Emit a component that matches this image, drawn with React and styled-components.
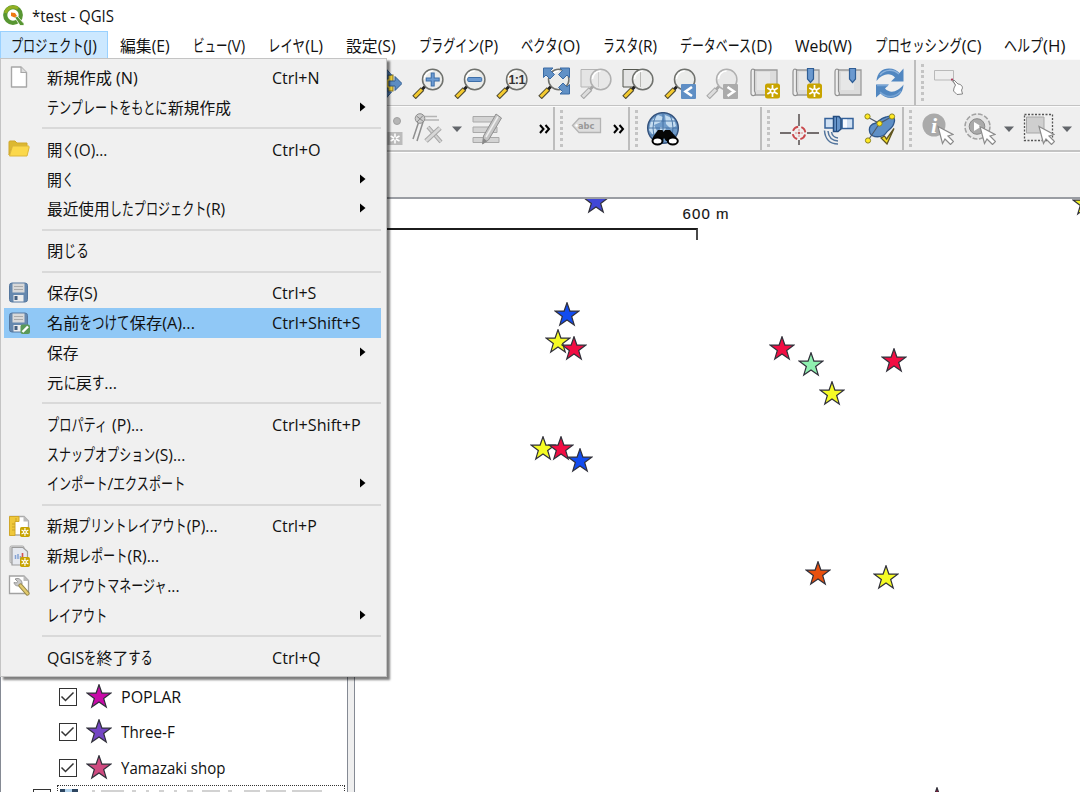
import React, { useLayoutEffect, useRef, useState } from 'react';
import styled, { createGlobalStyle } from 'styled-components';

const GlobalStyle = createGlobalStyle`
  * { box-sizing: border-box; }
  body { margin: 0; background: #fff; overflow: hidden; }
`;

const Window = styled.div`
  position: relative;
  width: 1080px;
  height: 792px;
  overflow: hidden;
  display: flex;
  flex-direction: column;
  background: #fff;
  color: #111;
  font-family: 'Open Sans', 'Noto Sans CJK JP', sans-serif;
  font-size: 15.5px;
  line-height: 22px;
  svg { display: block; flex: none; }
`;

/* ---------- text with condensed kana ---------- */

const FitBox = styled.span`
  display: inline-block;
  flex: none;
  white-space: nowrap;
`;
const FitInner = styled.span`
  display: inline-block;
  transform-origin: 0 50%;
`;
const KanaBox = styled.span`
  display: inline-block;
  width: ${(p) => p.$count * 0.77}em;
`;
const KanaInner = styled.span`
  display: inline-block;
  transform-origin: 0 60%;
  transform: scale(0.77, 1.08);
`;

function Fit({ text, width }) {
  const ref = useRef(null);
  const [scale, setScale] = useState(1);
  useLayoutEffect(() => {
    setScale(width / ref.current.offsetWidth);
  }, [text, width]);
  const runs = text.match(/[\u3040-\u30ff]+|[^\u3040-\u30ff]+/g);
  return (
    <FitBox style={{ width }}>
      <FitInner ref={ref} style={{ transform: `scaleX(${scale})` }}>
        {runs.map((run, i) =>
          /[\u3040-\u30ff]/.test(run) ? (
            <KanaBox key={i} $count={run.length}>
              <KanaInner>{run}</KanaInner>
            </KanaBox>
          ) : (
            <span key={i} style={{ whiteSpace: 'pre' }}>{run}</span>
          )
        )}
      </FitInner>
    </FitBox>
  );
}

/* ---------- title and menu bar ---------- */

const TitleBar = styled.header`
  flex: none;
  height: 31px;
  display: flex;
  align-items: center;
  padding: 0 0 0 2px;
  gap: 7px;
`;
const MenuBar = styled.nav`
  flex: none;
  height: 28px;
  display: flex;
  align-items: stretch;
`;
const MenuTitle = styled.div`
  display: flex;
  align-items: center;
  padding: 1px 11px 0 12px;
  ${(p) => p.$open && `
    background: #cce8ff;
    box-shadow: inset 0 0 0 1px #99d1ff;
    padding-left: 10.5px;
  `}
`;

const MENUS = [
  ['プロジェクト(J)', 86], ['編集(E)', 50], ['ビュー(V)', 52], ['レイヤ(L)', 55],
  ['設定(S)', 50], ['プラグイン(P)', 79], ['ベクタ(O)', 59], ['ラスタ(R)', 54.5],
  ['データベース(D)', 92], ['Web(W)', 57], ['プロセッシング(C)', 106], ['ヘルプ(H)', 61],
];

/* ---------- tool bars ---------- */

const ToolBarRow = styled.div`
  flex: none;
  display: flex;
  height: ${(p) => p.$height}px;
  background: #efefef;
  border-top: 1px solid #fbfbfb;
  border-bottom: ${(p) => p.$edge || 1}px solid #c3c3c3;
`;
const ToolGroup = styled.div`
  flex: none;
  display: flex;
  align-items: center;
  width: ${(p) => p.$width}px;
  padding-left: ${(p) => p.$indent || 0}px;
  border-right: 2px solid #bdbdbd;
  &:last-child { border-right: 0; }
`;
const Slot = styled.div`
  flex: none;
  display: flex;
  justify-content: center;
  width: ${(p) => p.$width || 42}px;
  margin-left: ${(p) => p.$gap || 0}px;
`;
const Handle = styled.div`
  flex: none;
  width: 3px;
  height: 37px;
  margin-left: 5px;
  background: repeating-linear-gradient(#c4c4c4 0 3px, transparent 3px 5.6px);
`;
const Expander = styled.div`
  flex: none;
  width: 12px;
  margin-left: ${(p) => p.$gap}px;
`;
const Spacer = styled.div`
  flex: none;
  height: 47px;
  background: #efefef;
  border-top: 1px solid #fdfdfd;
  border-bottom: 2px solid #9a9da3;
`;

const Icon = ({ w = 32, h = 32, children }) => (
  <svg width={w} height={h} viewBox={`0 0 ${w} ${h}`} fill="none">{children}</svg>
);
const Chevrons = () => (
  <Icon w={12} h={12}>
    <path d="M1 2 4.5 6 1 10M6.5 2 10 6 6.500 10" stroke="#000" strokeWidth="2" />
  </Icon>
);
const DropArrow = () => (
  <Icon w={10} h={6}><path d="M0 0.500H10L5 6Z" fill="#63666b" /></Icon>
);

function Lens({ gray, page, children }) {
  return (
    <Icon>
      {page && <path d="M1 2.500H18V20H1Z" fill="#e4e4e4" stroke={gray ? '#b5b5b5' : '#55574f'} />}
      <path d="M14 18.500 9.500 23" stroke={gray ? '#a7a7a7' : '#222'} strokeWidth="3" />
      <path d="M10.500 22 2 30.500" stroke={gray ? '#a5a5a5' : '#4b4630'} strokeWidth="5" />
      <path d="M9.800 22.500 2.700 29.700" stroke={gray ? '#ddd' : '#f5cb30'} strokeWidth="3" />
      <circle cx="20.700" cy="12.500" r="10.200" fill={gray ? '#e8e8e8' : '#ebecea'} stroke={gray ? '#b0b0b0' : '#6f716d'} strokeWidth="1.500" />
      {page && <path d="M18.500 3.500V20" stroke={gray ? '#ccc' : '#b8b8b4'} />}
      <path d="M12.500 12a8.200 8.200 0 0 1 8-8" stroke="#fff" strokeWidth="1.500" />
      {children}
    </Icon>
  );
}
const ZoomIn = () => (
  <Lens>
    <path d="M20.700 5.500V19.500M13.700 12.500H27.700" stroke="#3c6ea8" strokeWidth="4" />
    <path d="M20.700 6.500V18.500M14.700 12.500H26.700" stroke="#6c9bd2" strokeWidth="2" />
  </Lens>
);
const ZoomOut = () => (
  <Lens>
    <rect x="13.700" y="10.500" width="14" height="4" rx="1" fill="#6c9bd2" stroke="#3c6ea8" />
  </Lens>
);
const ZoomNative = () => (
  <Lens>
    <text x="20.900" y="17" textAnchor="middle" fontFamily="Liberation Sans, sans-serif" fontWeight="700" fontSize="12.500" textLength="17" fill="#333">1:1</text>
  </Lens>
);
const ZoomFull = () => (
  <Lens>
    <path d="M5.500 1H15L12.500 3.500 16.500 7.500 12 12 8 8 5.500 10.500ZM31.500 1H22L24.500 3.500 20.500 7.500 25 12 29 8 31.500 10.500ZM31.500 27H22L24.500 24.500 20.500 20.500 25 16 29 20 31.500 17.500Z" fill="#6191c6" stroke="#3b6ba4" />
  </Lens>
);
const ZoomLast = () => (
  <Lens>
    <rect x="17" y="17" width="15" height="15" rx="1" fill="#5f8fc5" />
    <path d="M28 20 21.500 24.500 28 29" stroke="#fff" strokeWidth="2.600" />
  </Lens>
);
const ZoomNext = () => (
  <Lens gray>
    <rect x="17" y="17" width="15" height="15" rx="1" fill="#ababab" />
    <path d="M21.500 20 28 24.500 21.500 29" stroke="#fff" strokeWidth="2.600" />
  </Lens>
);
const PanMap = () => (
  <Icon>
    <rect x="7" y="8" width="16" height="16" fill="#f2d33b" stroke="#7c6d20" />
    <path d="M32 16.500 25 9.500V14H19V19H25V23.500ZM15.500 1 9.500 8H13V12H18V8H21.500ZM13 21V25H9.500L15.500 32 21.500 25H18V21Z" fill="#5c8cc2" stroke="#315a8c" />
  </Icon>
);
function Spark({ x, y, gray }) {
  return (
    <g transform={`translate(${x} ${y})`}>
      <rect width="15" height="15" rx="2.500" fill={gray ? '#bdbdbd' : '#c8a400'} />
      <path d="M7.500 1.500V13.500M2.300 4.500 12.700 10.500M12.700 4.500 2.300 10.500" stroke="#fff" strokeWidth="1.700" />
      <circle cx="7.500" cy="7.500" r="2.800" fill="#fff" />
      <circle cx="7.500" cy="7.500" r="1.300" fill={gray ? '#bdbdbd' : '#c8a400'} />
    </g>
  );
}
function BookMap({ spark, ribbon }) {
  return (
    <Icon>
      <path d="M6 3H29V28H6Z" fill="#dcdcdc" stroke="#9a9a9a" strokeWidth="1.300" />
      <path d="M9 5H22V23H9Z" fill="#e7e7e7" />
      <path d="M6.500 2.500Q3 1 3 5V25Q2.500 29 6 28.500 8.500 28 6.500 24Z" fill="#eee" stroke="#909090" strokeWidth="1.200" />
      {ribbon && <path d="M17.500 1.500H23.500V12L20.500 15.500 17.500 12Z" fill="#6b99cf" stroke="#2f5e96" strokeWidth="1.200" />}
      {spark && <Spark x={17} y={16.500} />}
    </Icon>
  );
}
const Refresh = () => (
  <Icon>
    <path d="M2.500 14C3 6 8 1.500 15 1.500 19.500 1.500 23 3.500 25.500 6L29.500 1.500V14.500H17L21 10.500C16 5 8 7 2.500 14Z" fill="#5187c1" />
    <path d="M29.500 17.500C29 26 24 31 17 31 12.500 31 9 29 6.500 26.500L2 30.500V17.500H15L11 21.500C16 27 24 25 29.500 17.500Z" fill="#5187c1" />
    <path d="M6 8C11 2 19 2 25 7" stroke="#8cb2dd" strokeWidth="1.500" />
    <path d="M3 18.500H14M6 25C12 31 21 31 27 24" stroke="#79a5d5" strokeWidth="1.500" />
  </Icon>
);
const RectHand = () => (
  <Icon>
    <path d="M1.500 3.500H20.500V13H1.500Z" fill="#eee" stroke="#b9b9b9" />
    <path d="M18.500 12 26 21" stroke="#aaa" strokeWidth="2" />
    <circle cx="19" cy="12.500" r="1" fill="#b32950" />
    <path d="M20 14 22.500 18 21 21 20.500 24 24 27.500 29.500 27 28.500 23C31 20 28 17 25 17L21 13Z" fill="#fff" stroke="#777" strokeWidth="0.900" />
  </Icon>
);

const Digitize = () => (
  <Icon>
    <circle cx="3" cy="8" r="3.500" fill="#bbb" /><circle cx="18" cy="8" r="3.500" fill="#b5b5b5" stroke="#a0a0a0" />
    <path d="M8.500 19H23.500V32H8.500Z" fill="#bbb" />
    <path d="M16 20.500V30.500M11.500 23 20.500 28M20.500 23 11.500 28" stroke="#fff" strokeWidth="1.600" />
    <circle cx="16" cy="25.500" r="1.200" fill="#bbb" />
  </Icon>
);
const VertexTool = () => (
  <Icon>
    <path d="M7 8 1 26M11 9 5 28" stroke="#8f8f8f" strokeWidth="1.500" />
    <path d="M12 3.500H25M12 7H27" stroke="#b4b4b4" strokeWidth="1.500" />
    <circle cx="8" cy="5.500" r="4.800" fill="#ccc" stroke="#8e8e8e" />
    <path d="M4.500 3 12 9M11 2.500 5 9" stroke="#888" />
    <path d="M16 14 29 29" stroke="#a2a2a2" strokeWidth="4" />
    <path d="M16 14 29 29" stroke="#d2d2d2" strokeWidth="2" />
    <path d="M28 15 14 28" stroke="#a8a8a8" strokeWidth="5" />
    <path d="M28 15 14 28" stroke="#d8d8d8" strokeWidth="2.800" />
  </Icon>
);
const EditPencil = () => (
  <Icon>
    <path d="M2 3.500H26V9H2ZM2 14H26V19.500H2ZM2 24.500H28V29.500H2Z" fill="#d3d3d3" stroke="#a9a9a9" />
    <path d="M25 1 30.500 5 17.500 27 11.500 31 12.500 23Z" fill="#c4c4c4" stroke="#8f8f8f" />
    <path d="M27 3.500 15 24" stroke="#eee" strokeWidth="1.500" />
    <path d="M12.300 25 11.500 31 16 28Z" fill="#888" />
  </Icon>
);
const LabelTag = () => (
  <Icon>
    <path d="M1.500 12.500 8 5.500H29.500V19.500H8Z" fill="#dedede" stroke="#b4b4b4" strokeWidth="1.300" />
    <circle cx="5.500" cy="12.500" r="1.200" fill="#fff" />
    <text x="7" y="16" fontFamily="DejaVu Sans, sans-serif" fontWeight="700" fontSize="8.500" textLength="16.500" lengthAdjust="spacingAndGlyphs" fill="#999">abc</text>
  </Icon>
);
const GlobeBinoculars = () => (
  <Icon w={34} h={34}>
    <circle cx="17" cy="16" r="15.300" fill="#6f9bc9" stroke="#35537d" strokeWidth="1.500" />
    <path d="M5 9 12 3 17 5 15 10 8 13 11 19 7 23 3 18ZM19 3 28 7 30 14 25 17 20 12ZM14 15 20 16 18 22 14 20Z" fill="#c4dcf0" />
    <path d="M2 16H32M4 9H30M4 23H30M17 1V31M10 3Q4 16 10 29M24 3Q30 16 24 29" stroke="#4470a3" strokeWidth="0.900" />
    <path d="M12 18H16.500L17.500 20 19 18H24L30 25 32 29H20L18 26 16.500 29H6L7 25Z" fill="#070707" />
    <ellipse cx="11.500" cy="29" rx="5" ry="3.500" fill="#fff" stroke="#000" strokeWidth="2" />
    <ellipse cx="26.800" cy="29" rx="5" ry="3.500" fill="#fff" stroke="#000" strokeWidth="2" />
  </Icon>
);
const Crosshair = () => (
  <Icon w={40}>
    <path d="M1 20H12M28 20H40M20 1V13M20 27V32" stroke="#4c4444" strokeWidth="1.400" />
    <circle cx="20" cy="20" r="6.300" stroke="#c9484c" strokeWidth="1.900" strokeDasharray="6.600 3.296" strokeDashoffset="-1.650" />
    <path d="M20 16V24M16 20H24" stroke="#d98888" strokeDasharray="2.500 3" />
    <circle cx="20" cy="20" r="1" fill="#a22" />
  </Icon>
);
const Satellite = () => (
  <Icon>
    <path d="M3 5.500H12V15H3ZM20 5.500H31V15.500H20Z" fill="#cfe0f3" stroke="#34619a" strokeWidth="1.500" />
    <path d="M21 6.500H25V14.500H21Z" fill="#f8fbff" />
    <path d="M11.500 3.500H17L19 6V16L16 18.500H11.500Z" fill="#6695cb" stroke="#244d80" strokeWidth="1.500" />
    <path d="M14.500 4V18" stroke="#244d80" />
    <path d="M2.500 17.500C3 26 8 31 16 31M6 18C6.500 24 10 27.500 16 28M9.500 19C10 22 12 24.500 16 25" stroke="#52749c" strokeWidth="1.500" />
  </Icon>
);
const PolygonCheck = () => (
  <Icon>
    <path d="M6 20C4 14 7 11 12 10 15 8 17 5 22 4 28 2 32 4 30 10 29 16 24 16 22 20 19 25 8 25 6 20Z" fill="#5e8fc6" stroke="#2e578b" strokeWidth="1.300" />
    <path d="M3.500 4 15.500 10.500 28 3.500M15.500 10.500 4 27.500" stroke="#4b5866" strokeWidth="1.100" />
    {[[3.5, 3.5], [28, 3.5], [15.5, 10.5], [4, 27.5]].map(([x, y]) => (
      <circle key={`${x}-${y}`} cx={x} cy={y} r="2.600" fill="#ffe923" stroke="#8d8420" />
    ))}
    <path d="M17 25 20.500 23 22.500 26 30 15.500 23 31Z" fill="#f4df27" stroke="#5f5420" strokeWidth="1.300" />
  </Icon>
);
const Pointer = () => (
  <path d="M16 13.500 31 21.500 26 23 31.500 28.500 28.500 31.500 23 26 20.500 30.500Z" fill="#fff" stroke="#8b8b8b" strokeWidth="1.200" />
);
const Identify = () => (
  <Icon>
    <circle cx="12" cy="12" r="11.500" fill="#aaa" />
    <text x="12" y="19.500" textAnchor="middle" fontFamily="Liberation Serif, serif" fontStyle="italic" fontWeight="700" fontSize="22" fill="#fff">i</text>
    <Pointer />
  </Icon>
);
const RunAction = () => (
  <Icon>
    <circle cx="13.500" cy="13.500" r="11.500" stroke="#a2a2a2" strokeWidth="3.500" strokeDasharray="4.500 1.520" />
    <circle cx="13.500" cy="13.500" r="10.800" fill="#e7e7e7" stroke="#e7e7e7" strokeWidth="1.800" />
    <circle cx="13" cy="13.500" r="7.800" fill="#aaa" stroke="#888" />
    <path d="M10 9 17.500 13.500 10 18Z" fill="#fff" />
    <Pointer />
  </Icon>
);
const SelectArea = () => (
  <Icon>
    <path d="M1.500 1.500H29.500V27.500H1.500Z" stroke="#555" strokeWidth="1.300" strokeDasharray="2 1.500" />
    <path d="M3.500 4H21V20H3.500Z" fill="#cfcfcf" stroke="#a7a7a7" />
    <Pointer />
  </Icon>
);

const NAV_TOOLS = [
  <PanMap />, <ZoomIn />, <ZoomOut />, <ZoomNative />, <ZoomFull />,
  <Lens gray page />, <Lens page />, <ZoomLast />, <ZoomNext />,
  <BookMap spark />, <BookMap spark ribbon />, <BookMap ribbon />, <Refresh />,
];

/* ---------- stars ---------- */

const STAR = Array.from({ length: 10 }, (_, i) => {
  const r = i % 2 ? 4.9 : 12.3;
  const a = (Math.PI * i) / 5 - Math.PI / 2;
  return `${(13 + r * Math.cos(a)).toFixed(2)},${(13 + r * Math.sin(a)).toFixed(2)}`;
}).join(' ');
const Star = ({ color }) => (
  <Icon w={26} h={26}><polygon points={STAR} fill={color} stroke="#30303a" strokeWidth="1.200" /></Icon>
);

/* ---------- work area ---------- */

const WorkArea = styled.main`
  flex: 1;
  min-height: 0;
  display: flex;
`;
const LayerPanel = styled.aside`
  flex: none;
  width: 348px;
  border: solid #858a94;
  border-width: 0 1px 0 1px;
  padding-top: 480.5px;
  overflow: hidden;
`;
const Splitter = styled.div`
  flex: none;
  width: 7px;
  background: #efefef;
  border-right: 1px solid #858a94;
`;
const LayerRow = styled.div`
  display: flex;
  align-items: center;
  height: 35.3px;
  padding-left: 58px;
`;
const CheckBox = styled.span`
  display: flex;
  flex: none;
  width: 18px;
  height: 18px;
  margin-right: 9px;
  border: 1.500px solid #333;
  background: #fff;
`;
const LayerName = styled.span`
  margin-left: 8.5px;
`;
const CurrentRow = styled.div`
  display: flex;
  padding-left: 32px;
`;
const CurrentCheck = styled(CheckBox)`
  margin: 4px 6px 0 0;
`;
const FocusBox = styled.div`
  width: 288px;
  height: 24px;
  border: 1.5px dotted #333;
  padding: 3px 2px 0;
`;
const MapCanvas = styled.section`
  position: relative;
  flex: 1;
  overflow: hidden;
  background: #fff;
`;
const MapPin = styled.div`
  position: absolute;
  left: ${(p) => p.$x - 13 - 355}px;
  top: ${(p) => p.$y - 13 - 199}px;
`;
const ScaleBar = styled.div`
  position: absolute;
  left: 0;
  top: 28.5px;
  width: 342.500px;
  height: 12.5px;
  border-top: 2px solid #1c1c1c;
  border-right: 2px solid #4a4a4a;
`;
const ScaleText = styled.div`
  position: absolute;
  left: 327.5px;
  top: 4px;
  font-family: 'Liberation Sans', sans-serif;
  font-size: 15px;
  letter-spacing: 1.1px;
  -webkit-text-stroke: 0.150px #222;
`;

const LAYERS = [
  ['POPLAR', 60, '#c80aa8'],
  ['Three-F', 54, '#7446c4'],
  ['Yamazaki shop', 104.5, '#cf4a80'],
];
const PINS = [
  [595.6, 201.5, '#4147d6'], [1084.6, 203.7, '#f3f425'],
  [567.3, 314.8, '#124cf0'], [557.8, 342, '#f5fb25'], [574, 349, '#f20d43'],
  [781.5, 349, '#f20d43'], [811.3, 365, '#8ff0b0'], [831.6, 393.6, '#f5fb25'],
  [894, 361, '#f20d43'], [543, 449, '#f5fb25'], [560.6, 449, '#f20d43'],
  [579.6, 461.2, '#124cf0'], [818, 574, '#e8500f'], [885.7, 578, '#f5fb25'],
  [937.4, 800, '#9c1238'],
];

/* ---------- project menu ---------- */

const Popup = styled.div`
  position: absolute;
  left: 0;
  top: 58px;
  width: 387px;
  height: 619px;
  display: flex;
  flex-direction: column;
  padding: 3.600px 5px 0 3px;
  background: #f0f0f0;
  border: 1px solid #c4c4c4;
  box-shadow: 3px 3px 2px rgba(0, 0, 0, 0.5);
`;
const Item = styled.div`
  flex: none;
  display: flex;
  align-items: center;
  height: 29.800px;
  background: ${(p) => (p.$active ? '#90c8f6' : 'transparent')};
`;
const IconCell = styled.span`
  flex: none;
  display: flex;
  width: 43.3px;
  padding-left: 4px;
`;
const LabelCell = styled.span`
  flex: none;
  display: flex;
  width: 224.500px;
  padding-top: 1px;
`;
const ShortcutCell = styled.span`
  display: flex;
  padding-top: 1px;
`;
const SubArrow = styled.span`
  margin-left: 88.500px;
  margin-top: -1px;
`;
const Divider = styled.hr`
  flex: none;
  height: 2px;
  margin: 5.2px 0 5px 38px;
  border: 0;
  background: #d9d9d9;
`;

const NewFile = () => (
  <Icon w={22} h={22}>
    <path d="M3.500 1H13L18.500 6.500V21H3.500Z" fill="#fff" stroke="#a7a7a7" strokeWidth="1.400" strokeLinejoin="round" />
    <path d="M13 1V6.500H18.500" fill="#ddd" stroke="#a7a7a7" strokeWidth="1.200" />
  </Icon>
);
const Folder = () => (
  <Icon w={22} h={22}>
    <path d="M1 4Q1 3 2 3H7L9 5H19V9H4L1 17Z" fill="#dcb831" stroke="#d0a72c" />
    <path d="M4.500 8H20.500Q21.500 8 21 10L19 18H1.500Z" fill="#fbd84b" stroke="#dcb63a" />
  </Icon>
);
const Floppy = ({ edit }) => (
  <Icon w={22} h={22}>
    <rect x="1.500" y="1" width="18" height="19" rx="2.500" fill="#6688ae" stroke="#55779e" />
    <rect x="4.500" y="1.500" width="12" height="9" fill="#d9d9d9" />
    <path d="M6 4.500H15M6 7.500H15" stroke="#aaa" strokeWidth="1.200" />
    <rect x="5.500" y="13" width="10" height="6.500" fill="#eee" />
    <rect x="6.500" y="14" width="3" height="4" fill="#445f80" />
    {edit && (
      <g>
        <rect x="12.500" y="12.500" width="9.500" height="9.500" rx="2" fill="#5b9958" />
        <path d="M14.500 20 20 14.500" stroke="#fff" strokeWidth="2.400" />
      </g>
    )}
  </Icon>
);
const SmallSpark = () => (
  <g transform="translate(12 12) scale(0.660)"><Spark x={0} y={0} /></g>
);
const PrintLayout = () => (
  <Icon w={22} h={22}>
    <path d="M2 1.500H16L20.500 6V20H2Z" fill="#fff" stroke="#aaa" strokeWidth="1.300" />
    <path d="M15.500 1V6.500H21Z" fill="#bbb" />
    <path d="M1.500 1.500H11V6.500H7V20.500H1.500Z" fill="#efc83b" stroke="#d0a72a" />
    <path d="M4 9H7M4 12H7M4 15H7M8 3V6" stroke="#c9a128" />
    <SmallSpark />
  </Icon>
);
const Report = () => (
  <Icon w={22} h={22}>
    <rect x="2" y="1" width="14" height="17" rx="1.500" fill="#ddd" stroke="#aaa" />
    <path d="M4 2.500H15L19.500 6.500V20H4Z" fill="#e6e9ef" stroke="#9b9b9b" strokeWidth="1.200" />
    <path d="M7.500 10V14M10 9V14M12.500 11V14" stroke="#84a3d4" strokeWidth="1.500" />
    <path d="M14.500 8V13" stroke="#d45252" strokeWidth="1.600" />
    <SmallSpark />
  </Icon>
);
const Manager = () => (
  <Icon w={22} h={22}>
    <path d="M1.500 2H16L20.500 6.500V19.500H1.500Z" fill="#fff" stroke="#a2a2a2" strokeWidth="1.300" />
    <path d="M15.500 1.500V7H21Z" fill="#bbb" />
    <path d="M7 5 9.500 7.500 8.500 9 6 8.500C6.500 12 10 12.500 12 11.500L14 10C14.500 7 11.500 4 9 4.500Z" fill="#c9c9c9" stroke="#8d8d8d" strokeWidth="0.900" />
    <path d="M12.500 11.500 19.500 19.500" stroke="#96874b" strokeWidth="4.200" strokeLinecap="round" />
    <path d="M12.500 11.500 19.500 19.500" stroke="#e3cb6d" strokeWidth="2.400" strokeLinecap="round" />
  </Icon>
);

const ITEMS = [
  { icon: <NewFile />, text: '新規作成 (N)', w: 91, key: 'Ctrl+N', kw: 47.5 },
  { text: 'テンプレートをもとに新規作成', w: 183.5, sub: true },
  null,
  { icon: <Folder />, text: '開く(O)...', w: 60.5, key: 'Ctrl+O', kw: 48 },
  { text: '開く', w: 26, sub: true },
  { text: '最近使用したプロジェクト(R)', w: 178, sub: true },
  null,
  { text: '閉じる', w: 41 },
  null,
  { icon: <Floppy />, text: '保存(S)', w: 51, key: 'Ctrl+S', kw: 44.5 },
  { icon: <Floppy edit />, text: '名前をつけて保存(A)...', w: 148, key: 'Ctrl+Shift+S', kw: 88, active: true },
  { text: '保存', w: 31.5, sub: true },
  { text: '元に戻す...', w: 70 },
  null,
  { text: 'プロパティ (P)...', w: 96, key: 'Ctrl+Shift+P', kw: 88.5 },
  { text: 'スナップオプション(S)...', w: 138 },
  { text: 'インポート/エクスポート', w: 139, sub: true },
  null,
  { icon: <PrintLayout />, text: '新規プリントレイアウト(P)...', w: 170.5, key: 'Ctrl+P', kw: 45 },
  { icon: <Report />, text: '新規レポート(R)...', w: 112.5 },
  { icon: <Manager />, text: 'レイアウトマネージャ...', w: 133 },
  { text: 'レイアウト', w: 60.5, sub: true },
  null,
  { text: 'QGISを終了する', w: 106, key: 'Ctrl+Q', kw: 48 },
];

const Logo = () => (
  <Icon w={23} h={23}>
    <circle cx="11" cy="11" r="7.800" stroke="#589632" strokeWidth="4.200" />
    <path d="M3.500 9A8 8 0 0 1 16 4.500" stroke="#93b023" strokeWidth="3" />
    <path d="M12.500 13 15.500 12.500 22 19.500V21.500H18Z" fill="#589632" stroke="#fff" strokeWidth="0.800" />
    <path d="M9 8.500 13 9 15 12 12.500 13.500 9 12Z" fill="#ee7913" />
  </Icon>
);

export default function App() {
  return (
    <Window>
      <GlobalStyle />
      <TitleBar>
        <Logo />
        <Fit text="*test - QGIS" width={82} />
      </TitleBar>
      <MenuBar>
        {MENUS.map(([text, width], i) => (
          <MenuTitle key={text} $open={i === 0}><Fit text={text} width={width} /></MenuTitle>
        ))}
      </MenuBar>

      <ToolBarRow $height={47}>
        <ToolGroup $width={916} $indent={365}>
          {NAV_TOOLS.map((tool, i) => <Slot key={i}>{tool}</Slot>)}
        </ToolGroup>
        <ToolGroup $width={164}>
          <Handle />
          <Slot $width={32} $gap={9}><RectHand /></Slot>
        </ToolGroup>
      </ToolBarRow>
      <ToolBarRow $height={46} $edge={2}>
        <ToolGroup $width={555} $indent={379}>
          <Slot $width={32}><Digitize /></Slot>
          <Slot $width={32} $gap={1}><VertexTool /></Slot>
          <Slot $width={10} $gap={8}><DropArrow /></Slot>
          <Slot $width={32} $gap={9}><EditPencil /></Slot>
          <Expander $gap={36}><Chevrons /></Expander>
        </ToolGroup>
        <ToolGroup $width={75}>
          <Handle />
          <Slot $width={32} $gap={8}><LabelTag /></Slot>
          <Expander $gap={10}><Chevrons /></Expander>
        </ToolGroup>
        <ToolGroup $width={132}>
          <Handle />
          <Slot $width={34} $gap={8}><GlobeBinoculars /></Slot>
        </ToolGroup>
        <ToolGroup $width={142}>
          <Handle />
          <Slot $width={40} $gap={9}><Crosshair /></Slot>
          <Slot $width={32} $gap={3}><Satellite /></Slot>
          <Slot $width={32} $gap={10}><PolygonCheck /></Slot>
        </ToolGroup>
        <ToolGroup $width={176}>
          <Handle />
          <Slot $width={32} $gap={10}><Identify /></Slot>
          <Slot $width={32} $gap={10}><RunAction /></Slot>
          <Slot $width={10} $gap={8}><DropArrow /></Slot>
          <Slot $width={32} $gap={9}><SelectArea /></Slot>
          <Slot $width={10} $gap={7}><DropArrow /></Slot>
        </ToolGroup>
      </ToolBarRow>
      <Spacer />
      <WorkArea>
        <LayerPanel>
          {LAYERS.map(([name, width, color]) => (
            <LayerRow key={name}>
              <CheckBox>
                <Icon w={15} h={15}><path d="M1.500 7.500 5.500 11.500 13.500 3.500" stroke="#333" strokeWidth="1.500" /></Icon>
              </CheckBox>
              <Star color={color} />
              <LayerName><Fit text={name} width={width} /></LayerName>
            </LayerRow>
          ))}
          <CurrentRow>
            <CurrentCheck />
            <FocusBox>
              <Icon w={270} h={4}>
                <path d="M0 0H18V4H0Z" fill="#2d4560" /><path d="M5 0H12V4H5Z" fill="#b4d5ef" />
                <path d="M32 2H35M41 2H64M72 2H76M86 2H89M99 2H104M114 2H117M127 2H133M142 2H160M168 2H172M184 2H200M206 2H226M232 2H262" stroke="#c4c4c4" strokeWidth="1.500" />
              </Icon>
            </FocusBox>
          </CurrentRow>
        </LayerPanel>
        <Splitter />
        <MapCanvas>
          <ScaleBar />
          <ScaleText>600 m</ScaleText>
          {PINS.map(([x, y, color]) => (
            <MapPin key={`${x}-${y}`} $x={x} $y={y}><Star color={color} /></MapPin>
          ))}
        </MapCanvas>
      </WorkArea>

      <Popup>
        {ITEMS.map((item, i) =>
          item ? (
            <Item key={i} $active={item.active}>
              <IconCell>{item.icon}</IconCell>
              <LabelCell><Fit text={item.text} width={item.w} /></LabelCell>
              {item.key && <ShortcutCell><Fit text={item.key} width={item.kw} /></ShortcutCell>}
              {item.sub && (
                <SubArrow><Icon w={6} h={10}><path d="M0 0.500 5.500 5 0 9.500Z" fill="#000" /></Icon></SubArrow>
              )}
            </Item>
          ) : (
            <Divider key={i} />
          )
        )}
      </Popup>
    </Window>
  );
}
